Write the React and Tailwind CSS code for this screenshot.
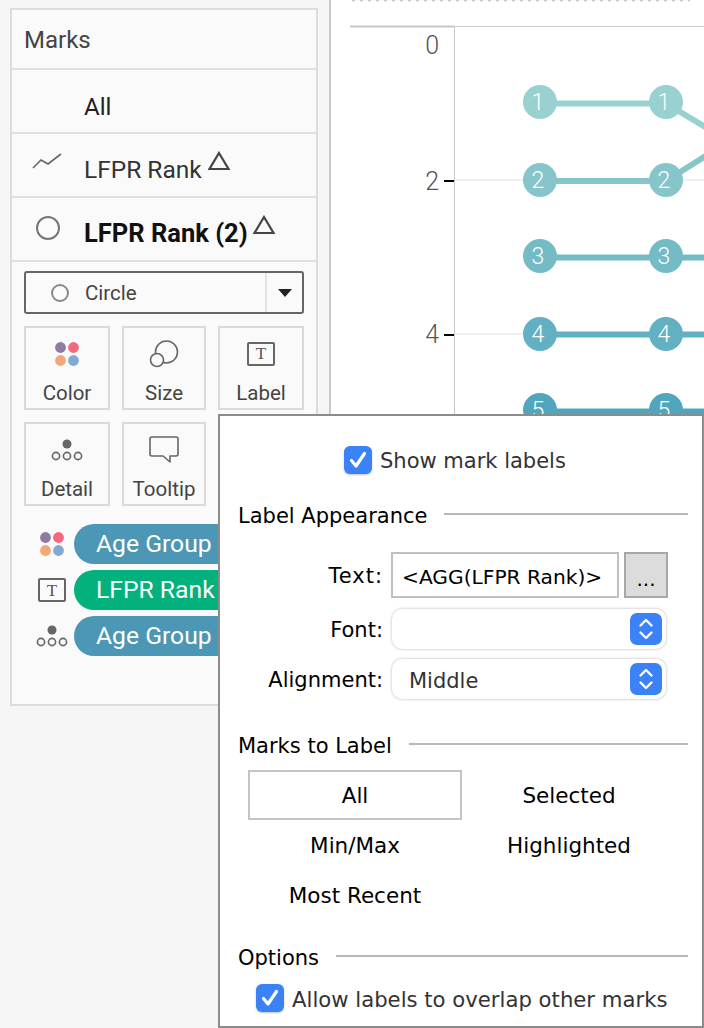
const sans = "font-['Roboto','Liberation_Sans',sans-serif]";

function ColorDots() {
  return (
    <svg width="26" height="26" viewBox="0 0 28 28">
      <circle cx="7" cy="7" r="5.8" fill="#8f7aa3" />
      <circle cx="21" cy="7" r="5.8" fill="#f4697f" />
      <circle cx="7" cy="21" r="5.8" fill="#f2a777" />
      <circle cx="21" cy="21" r="5.8" fill="#82a9d1" />
    </svg>
  );
}

function DetailDots() {
  return (
    <svg width="32" height="24" viewBox="0 0 32 24" fill="none" stroke="#666" strokeWidth="1.6">
      <circle cx="16" cy="6" r="4.5" fill="#666" stroke="none" />
      <circle cx="5" cy="18" r="3.6" />
      <circle cx="16" cy="18" r="3.6" />
      <circle cx="27" cy="18" r="3.6" />
    </svg>
  );
}

function TextBox() {
  return (
    <div className="w-[28px] h-[24px] border-2 border-[#666] rounded-[2px] flex items-center justify-center font-['Liberation_Serif',serif] text-[17px] leading-none text-[#555]">
      T
    </div>
  );
}

function SizeIcon() {
  return (
    <svg width="30" height="28" viewBox="0 0 30 28" fill="none" stroke="#666" strokeWidth="1.6">
      <circle cx="17.5" cy="12" r="11" fill="#fafafa" />
      <circle cx="8" cy="20" r="6.5" fill="#fafafa" />
    </svg>
  );
}

function TooltipIcon() {
  return (
    <svg width="30" height="28" viewBox="0 0 30 28" fill="none" stroke="#666" strokeWidth="1.6" strokeLinejoin="round">
      <path d="M3 1h24a2 2 0 0 1 2 2v15a2 2 0 0 1-2 2h-6v6l-7-6H3a2 2 0 0 1-2-2V3a2 2 0 0 1 2-2z" />
    </svg>
  );
}

function Delta({ className }) {
  return (
    <svg width="22" height="20" viewBox="0 0 22 20" fill="none" stroke="#444" strokeWidth="2.2" className={className}>
      <path d="M11 2 L20.5 18 H1.5 Z" />
    </svg>
  );
}

function MarkRow({ icon, children }) {
  return (
    <div className="h-[64px] border-b-2 border-[#e0e0e0] flex items-center">
      <div className="w-[72px] flex justify-center">{icon}</div>
      {children}
    </div>
  );
}

function CardButton({ label, icon, width }) {
  return (
    <div className={`${width} h-[84px] border-2 border-[#d9d9d9] flex flex-col items-center`}>
      <div className="h-[50px] flex items-center pt-[1px]">{icon}</div>
      <div className="text-[20.5px] leading-[30px] text-[#444]">{label}</div>
    </div>
  );
}

function Pill({ color, icon, label }) {
  return (
    <div className="flex items-center h-[40px]">
      <div className="w-[62px] flex justify-center pl-[18px]">{icon}</div>
      <div className={`${color} w-[240px] h-[40px] rounded-full pl-[22px] text-white text-[24.7px] leading-[40px]`}>{label}</div>
    </div>
  );
}

function MarksCard() {
  return (
    <div className={`w-[331px] shrink-0 border-r-2 border-[#c8c8c8] pt-[8px] pl-[10px] ${sans}`}>
      <div className="w-[308px] h-[698px] border-2 border-[#dcdcdc] bg-[#fafafa]">
        <div className="h-[60px] border-b-2 border-[#e0e0e0] pl-[12px] text-[24px] leading-[60px] text-[#444]">Marks</div>
        <MarkRow>
          <span className="text-[24px] text-[#222] pt-[11px]">All</span>
        </MarkRow>
        <MarkRow
          icon={
            <svg width="30" height="16" viewBox="0 0 30 16" fill="none" stroke="#666" strokeWidth="1.6" className="mb-[8px] mr-[2px]">
              <path d="M1 15 L9 7 L16 11 L29 1" />
            </svg>
          }
        >
          <span className="text-[24.5px] text-[#333] pt-[10px]">LFPR Rank</span>
          <Delta className="mb-[8px] ml-[6px]" />
        </MarkRow>
        <MarkRow
          icon={<div className="w-[24px] h-[24px] rounded-full border-2 border-[#777] mb-[2px]" />}
        >
          <span className="text-[25.5px] font-bold text-[#111] pt-[8px]">LFPR Rank (2)</span>
          <Delta className="mb-[8px] ml-[5px]" />
        </MarkRow>
        <div className="pt-[9px] pl-[12px]">
          <div className="w-[280px] h-[43px] border-2 border-[#666] rounded-[3px] flex items-center">
            <div className="flex-1 h-full flex items-center border-r-2 border-[#e4e4e4]">
              <div className="w-[18px] h-[18px] rounded-full border-2 border-[#888] ml-[25px]" />
              <span className="ml-[16px] text-[20.5px] text-[#444] pt-[1px]">Circle</span>
            </div>
            <div className="w-[35px] flex justify-center">
              <div className="w-0 h-0 border-x-[7px] border-x-transparent border-t-[8px] border-t-[#222]" />
            </div>
          </div>
          <div className="flex gap-[12px] mt-[12px]">
            <CardButton width="w-[86px]" label="Color" icon={<ColorDots />} />
            <CardButton width="w-[84px]" label="Size" icon={<SizeIcon />} />
            <CardButton width="w-[86px]" label="Label" icon={<TextBox />} />
          </div>
          <div className="flex gap-[12px] mt-[12px]">
            <CardButton width="w-[86px]" label="Detail" icon={<DetailDots />} />
            <CardButton width="w-[84px]" label="Tooltip" icon={<TooltipIcon />} />
          </div>
          <div className="flex flex-col gap-[6px] mt-[18px] -ml-[12px] w-[304px] overflow-hidden">
            <Pill color="bg-[#4b97b5]" label="Age Group" icon={<ColorDots />} />
            <Pill color="bg-[#02b17c]" label="LFPR Rank" icon={<TextBox />} />
            <Pill color="bg-[#4b97b5]" label="Age Group" icon={<DetailDots />} />
          </div>
        </div>
      </div>
    </div>
  );
}

const rows = [
  { n: 1, cy: 102, ly: 103.5, color: '#99d1d0' },
  { n: 2, cy: 180, ly: 181, color: '#86c6cb' },
  { n: 3, cy: 256, ly: 257.5, color: '#74bbc6' },
  { n: 4, cy: 334, ly: 334.5, color: '#62b1c2' },
  { n: 5, cy: 410, ly: 411.5, color: '#50a7bd' },
];

function Chart() {
  return (
    <div className="flex-1 bg-white">
      <svg width="373" height="420" viewBox="331 0 373 420" className="block">
        <path d="M352 0.5 H690" stroke="#c4c4c4" strokeWidth="1.5" strokeDasharray="3 5" />
        <line x1="350" y1="26.5" x2="454" y2="26.5" stroke="#c8c8c8" strokeWidth="2" />
        <line x1="454" y1="26.5" x2="704" y2="26.5" stroke="#c8c8c8" strokeWidth="1" />
        <line x1="454.5" y1="26" x2="454.5" y2="420" stroke="#c8c8c8" strokeWidth="1" />
        <line x1="455" y1="180" x2="704" y2="180" stroke="#f0f0f0" strokeWidth="2" />
        <line x1="455" y1="334" x2="704" y2="334" stroke="#f0f0f0" strokeWidth="2" />
        <line x1="444" y1="181" x2="454" y2="181" stroke="#000" strokeWidth="2" />
        <line x1="444" y1="335" x2="454" y2="335" stroke="#000" strokeWidth="2" />
        {[['0', 54], ['2', 190], ['4', 343]].map(([t, y]) => (
          <text key={t} x="439" y={y} textAnchor="end" fontFamily="Roboto, sans-serif" fontWeight="300" fontSize="25" fill="#555">{t}</text>
        ))}
        <path d="M540 103.5 H666 L720 136" fill="none" stroke="#99d1d0" strokeWidth="6" />
        <path d="M540 181 H666 L720 147" fill="none" stroke="#86c6cb" strokeWidth="6" />
        {rows.slice(2).map((r) => (
          <line key={r.n} x1="540" y1={r.ly} x2="704" y2={r.ly} stroke={r.color} strokeWidth="6" />
        ))}
        {rows.map((r) =>
          [540, 666].map((x) => (
            <g key={x}>
              <circle cx={x} cy={r.cy} r="17" fill={r.color} />
              <text x={x - 2} y={r.cy + 8} textAnchor="middle" fontFamily="Roboto, sans-serif" fontWeight="300" fontSize="23" fill="#fff">{r.n}</text>
            </g>
          ))
        )}
      </svg>
    </div>
  );
}

function Checkbox() {
  return (
    <div className="w-[28px] h-[28px] rounded-[6px] bg-[#3b82f6] flex items-center justify-center shadow-[0_1px_2px_rgba(0,0,0,0.25)]">
      <svg width="20" height="20" viewBox="0 0 20 20" fill="none" stroke="#fff" strokeWidth="3.2" strokeLinecap="round" strokeLinejoin="round">
        <path d="M3.5 10.5 L8 16 L16.5 3.5" />
      </svg>
    </div>
  );
}

function SectionTitle({ children, className }) {
  return (
    <div className={`flex items-center h-[28px] pr-[14px] ${className}`}>
      <span className="text-[21px] text-black leading-[28px] pt-[2px]">{children}</span>
      <div className="flex-1 h-[2px] bg-[#b8b8b8] ml-[17px] mb-[2px]" />
    </div>
  );
}

function FieldLabel({ children, className = '' }) {
  return <div className={`w-[145px] text-right text-[21px] text-black pt-[4px] ${className}`}>{children}</div>;
}

function SelectBox({ value }) {
  return (
    <div className="ml-[9px] w-[274px] h-[40px] bg-white rounded-[10px] shadow-[0_0_3px_rgba(0,0,0,0.3)] flex items-center justify-between pl-[17px] pr-[4px]">
      <span className="text-[21px] text-[#333] pt-[6px]">{value}</span>
      <div className="w-[32px] h-[32px] rounded-[7px] bg-[#3b82f6] flex items-center justify-center">
        <svg width="16" height="24" viewBox="0 0 16 24" fill="none" stroke="#fff" strokeWidth="2.4" strokeLinecap="round" strokeLinejoin="round">
          <path d="M2.5 8.5 L8 3 L13.5 8.5 M2.5 15.5 L8 21 L13.5 15.5" />
        </svg>
      </div>
    </div>
  );
}

function LabelDialog() {
  const option = 'h-[50px] flex items-center justify-center text-[21.5px] text-black pt-[3px]';
  return (
    <div className="absolute left-[218px] top-[414px] w-[486px] h-[614px] bg-white border-2 border-[#8c8c8c] pl-[18px] font-['DejaVu_Sans',sans-serif]">
      <div className="flex items-center mt-[30px] ml-[106px] h-[28px]">
        <Checkbox />
        <span className="ml-[8px] text-[21px] text-[#333] pt-[3px]">Show mark labels</span>
      </div>
      <SectionTitle className="mt-[27px]">Label Appearance</SectionTitle>
      <div className="flex items-center mt-[23px] h-[46px]">
        <FieldLabel className="tracking-[1px]">Text:</FieldLabel>
        <div className="ml-[8px] w-[228px] h-[46px] border-2 border-[#c0c0c0] pl-[9px] flex items-center text-[20.2px] text-black pt-[4px]">
          {'<AGG(LFPR Rank)>'}
        </div>
        <div className="ml-[5px] w-[44px] h-[46px] bg-[#dcdcdc] border-2 border-[#a8a8a8] flex items-center justify-center text-[20px] text-black pt-[8px]">
          ...
        </div>
      </div>
      <div className="flex items-center mt-[11px]">
        <FieldLabel>Font:</FieldLabel>
        <SelectBox value="" />
      </div>
      <div className="flex items-center mt-[10px]">
        <FieldLabel>Alignment:</FieldLabel>
        <SelectBox value="Middle" />
      </div>
      <SectionTitle className="mt-[32px]">Marks to Label</SectionTitle>
      <div className="grid grid-cols-[214px_214px] ml-[10px] mt-[11px]">
        <div className={`${option} border-2 border-[#c4c4c4]`}>All</div>
        <div className={option}>Selected</div>
        <div className={option}>Min/Max</div>
        <div className={option}>Highlighted</div>
        <div className={option}>Most Recent</div>
      </div>
      <SectionTitle className="mt-[23px]">Options</SectionTitle>
      <div className="flex items-center mt-[13px] ml-[18px] h-[28px]">
        <Checkbox />
        <span className="ml-[8px] text-[21.2px] text-[#333] whitespace-nowrap pt-[3px]">Allow labels to overlap other marks</span>
      </div>
    </div>
  );
}

export default function App() {
  return (
    <div className="relative w-[704px] h-[1028px] overflow-hidden bg-[#f5f5f5] flex">
      <MarksCard />
      <Chart />
      <LabelDialog />
    </div>
  );
}
